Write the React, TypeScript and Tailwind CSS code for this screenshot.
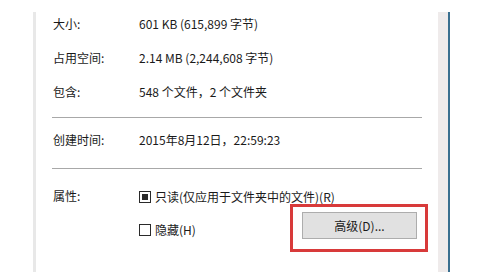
import React from "react";

const font = { fontFamily: '"Noto Sans CJK SC", "Noto Sans", sans-serif' };

function Row({ label, value, className = "" }: { label: string; value: string; className?: string }) {
  return (
    <div className={`flex h-[16px] items-center leading-[16px] ${className}`}>
      <div className="w-[103px] pl-[17px] shrink-0">{label}</div>
      <div>{value}</div>
    </div>
  );
}

function Checkbox({ checked }: { checked?: boolean }) {
  return (
    <div className="w-[12px] h-[12px] border border-[#2a2a2a] bg-white flex items-center justify-center shrink-0">
      {checked && <div className="w-[6px] h-[6px] bg-[#2a2a2a]" />}
    </div>
  );
}

export default function App() {
  return (
    <div className="w-[480px] h-[279px] bg-white text-[12px] text-[#1a1a1a] overflow-hidden" style={font}>
      <div className="pt-[12px] flex h-[272px]">
        <div className="w-[33px] shrink-0" />
        <div className="w-[3px] bg-[#e8e8e8] shrink-0" />
        <div className="flex-1 flex flex-col pt-[4px]">
          <Row label="大小:" value="601 KB (615,899 字节)" />
          <Row label="占用空间:" value="2.14 MB (2,244,608 字节)" className="mt-[18px]" />
          <Row label="包含:" value="548 个文件，2 个文件夹" className="mt-[18px]" />
          <div className="mt-[17px] h-[1px] bg-[#a8a8a8] ml-[16px] mr-[16px]" />
          <Row label="创建时间:" value="2015年8月12日，22:59:23" className="mt-[14px]" />
          <div className="mt-[20px] h-[1px] bg-[#a8a8a8] ml-[16px] mr-[16px]" />
          <div className="mt-[19px] flex">
            <div className="w-[103px] pl-[17px] shrink-0 leading-[16px] h-[16px]">属性:</div>
            <div className="flex-1 flex flex-col mt-[1px]">
              <div className="flex items-center h-[16px] leading-[16px]">
                <Checkbox checked />
                <span className="ml-[4px]">只读(仅应用于文件夹中的文件)(R)</span>
              </div>
              <div className="flex items-center -mt-[1px]">
                <div className="flex items-center mt-[3px] leading-[16px]">
                  <Checkbox />
                  <span className="ml-[4px]">隐藏(H)</span>
                </div>
                <div className="ml-auto mr-[10px] w-[138px] h-[48px] border-[3px] border-[#d83a3a] pl-[9px] pt-[5px]">
                  <div className="w-[115px] h-[27px] bg-[#e1e1e1] border border-[#adadad] flex items-center justify-center leading-[16px]">
                    高级(D)...
                  </div>
                </div>
              </div>
            </div>
          </div>
        </div>
        <div className="w-[10px] bg-[#efebeb] shrink-0" />
        <div className="w-[2px] bg-[#3a6f8f] shrink-0" />
        <div className="w-[30px] shrink-0" />
      </div>
    </div>
  );
}
